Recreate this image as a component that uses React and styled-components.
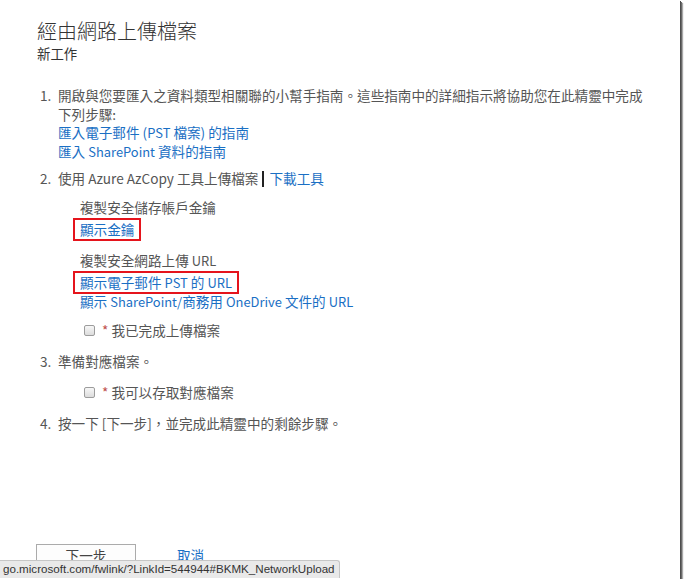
import React from 'react';
import styled, { createGlobalStyle } from 'styled-components';

const Global = createGlobalStyle`
  html, body { margin: 0; padding: 0; background: #fff; }
  body { font-family: "Noto Sans CJK TC", "Noto Sans", sans-serif; }
`;

const Frame = styled.div`
  position: relative;
  box-sizing: border-box;
  width: 680px;
  height: 579px;
  padding: 18px 0 0 37px;
  display: flex;
  flex-direction: column;
  background: #fff;
  color: #555;
  font-size: 13.6px;
  line-height: 18.5px;
  box-shadow: 1px 1px 0 #4e4e4e, 2px 2px 0 #6a6a6a, 3px 3px 1px #a8a8a8;
`;

const Title = styled.h1`
  margin: 0;
  font-size: 20px;
  line-height: 26px;
  font-weight: 300;
  color: #333;
`;

const Subtitle = styled.div`
  color: #333;
  font-size: 13.4px;
  line-height: 18px;
`;

const Steps = styled.ol`
  list-style: none;
  margin: 24px 0 0;
  padding: 0;
`;

const Step = styled.li`
  display: grid;
  grid-template-columns: 21px 592px;
  margin-top: ${p => p.$mt || 0}px;
`;

const Num = styled.span`
  padding-left: 3px;
`;

const Body = styled.div`
  display: flex;
  flex-direction: column;
`;

const Link = styled.a`
  color: #1a6fc4;
  text-decoration: none;
  cursor: pointer;
`;

const Latin = styled.span`
  font-size: 0.95em;
  line-height: 1;
`;

const Sep = styled.span`
  display: inline-block;
  width: 0;
  height: 16px;
  border-left: 2px solid #222;
  margin: 0 5px 0 4px;
  vertical-align: -3px;
`;

const Indent = styled.div`
  display: flex;
  flex-direction: column;
  padding-left: 22px;
  margin-top: ${p => p.$mt}px;
`;

const SubSection = styled.div`
  display: flex;
  flex-direction: column;
  & + & { margin-top: 12.5px; }
`;

const ActionLink = styled(Link)`
  display: block;
  align-self: flex-start;
  margin-top: ${p => p.$mt || 0}px;
`;

const Marked = styled.span`
  display: inline-block;
  padding: 0 5px;
  margin-left: -5px;
  outline: 2px solid #e5141c;
  outline-offset: 0;
`;

const CheckRow = styled.label`
  display: flex;
  align-items: center;
  gap: 7px;
  padding-left: 4px;
  margin-top: ${p => p.$mt || 0}px;
`;

const Box = styled.span`
  display: inline-block;
  width: 9px;
  height: 9px;
  border: 1px solid #9c9c9c;
  border-radius: 2px;
  background: linear-gradient(#f7f7f7, #dcdcdc);
`;

const Star = styled.span`
  color: #c0504d;
`;

const Footer = styled.div`
  margin-top: auto;
  margin-left: -1px;
  padding-bottom: 10px;
  display: flex;
  align-items: center;
`;

const Button = styled.button`
  box-sizing: border-box;
  width: 100px;
  height: 25px;
  padding: 0 0 2px;
  border: 1px solid #ababab;
  background: #fdfdfd;
  color: #444;
  font: inherit;
`;

const Cancel = styled(Link)`
  margin-left: 41px;
  margin-top: -2px;
`;

const StatusBar = styled.div`
  position: absolute;
  left: 0;
  bottom: 1px;
  box-sizing: border-box;
  width: 340px;
  height: 18px;
  padding-left: 3px;
  background: #e9e9e9;
  border: 1px solid #c6c6c6;
  border-left: none;
  border-bottom: none;
  border-top-right-radius: 3px;
  color: #333;
  font-family: "Liberation Sans", sans-serif;
  font-size: 11.6px;
  line-height: 16px;
  white-space: nowrap;
`;

export default function App() {
  return (
    <>
      <Global />
      <Frame>
        <Title>經由網路上傳檔案</Title>
        <Subtitle>新工作</Subtitle>
        <Steps>
          <Step>
            <Num>1.</Num>
            <Body>
              <span>開啟與您要匯入之資料類型相關聯的小幫手指南。這些指南中的詳細指示將協助您在此精靈中完成下列步驟:</span>
              <ActionLink>匯入電子郵件 (<Latin>PST</Latin> 檔案) 的指南</ActionLink>
              <ActionLink>匯入 <Latin>SharePoint</Latin> 資料的指南</ActionLink>
            </Body>
          </Step>
          <Step $mt={9}>
            <Num>2.</Num>
            <Body>
              <span>使用 Azure AzCopy 工具上傳檔案<Sep /><Link>下載工具</Link></span>
              <Indent $mt={10.5}>
                <SubSection>
                  <span>複製安全儲存帳戶金鑰</span>
                  <ActionLink $mt={3.5}><Marked>顯示金鑰</Marked></ActionLink>
                </SubSection>
                <SubSection>
                  <span>複製安全網路上傳 <Latin>URL</Latin></span>
                  <ActionLink $mt={3.5}><Marked>顯示電子郵件 <Latin>PST</Latin> 的 <Latin>URL</Latin></Marked></ActionLink>
                  <ActionLink>顯示 <Latin>SharePoint/</Latin>商務用 <Latin>OneDrive</Latin> 文件的 <Latin>URL</Latin></ActionLink>
                </SubSection>
                <CheckRow $mt={11}>
                  <Box />
                  <span><Star>*</Star> 我已完成上傳檔案</span>
                </CheckRow>
              </Indent>
            </Body>
          </Step>
          <Step $mt={12.5}>
            <Num>3.</Num>
            <Body>
              <span>準備對應檔案。</span>
              <Indent $mt={12.5}>
                <CheckRow>
                  <Box />
                  <span><Star>*</Star> 我可以存取對應檔案</span>
                </CheckRow>
              </Indent>
            </Body>
          </Step>
          <Step $mt={12.5}>
            <Num>4.</Num>
            <Body>
              <span>按一下 [下一步]，並完成此精靈中的剩餘步驟。</span>
            </Body>
          </Step>
        </Steps>
        <Footer>
          <Button>下一步</Button>
          <Cancel>取消</Cancel>
        </Footer>
        <StatusBar>go.microsoft.com/fwlink/?LinkId=544944#BKMK_NetworkUpload</StatusBar>
      </Frame>
    </>
  );
}
